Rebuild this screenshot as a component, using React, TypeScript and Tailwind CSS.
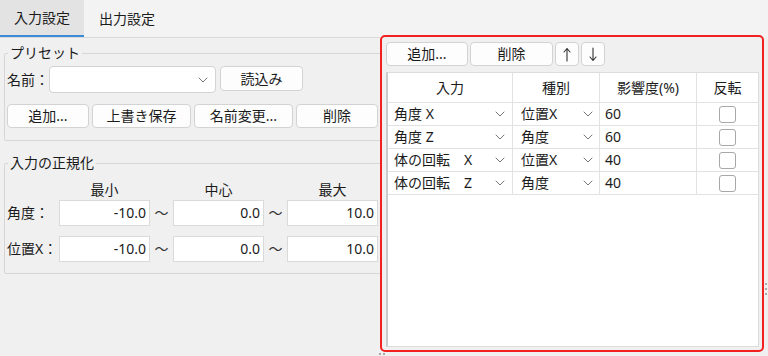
import { ChevronDown } from 'lucide-react';

const rows = [
  { input: '角度 X', kind: '位置X', rate: '60' },
  { input: '角度 Z', kind: '角度', rate: '60' },
  { input: '体の回転　X', kind: '位置X', rate: '40' },
  { input: '体の回転　Z', kind: '角度', rate: '40' },
];

const ranges = [
  { label: '角度：', min: '-10.0', mid: '0.0', max: '10.0' },
  { label: '位置X：', min: '-10.0', mid: '0.0', max: '10.0' },
];

function Btn({ w, h = 'h-[24px]', children }: { w: string; h?: string; children: React.ReactNode }) {
  return (
    <button className={`${w} ${h} shrink-0 bg-[#fdfdfd] border border-[#d3d3d3] rounded-[4px] flex items-center justify-center`}>
      {children}
    </button>
  );
}

function NumBox({ value }: { value: string }) {
  return (
    <div className="h-[26px] bg-white border border-[#dadada] flex items-center justify-end pr-[3px]">
      {value}
    </div>
  );
}

// thin arrow like the system glyph
function Arrow({ down }: { down?: boolean }) {
  return (
    <svg width="10" height="15" viewBox="0 0 10 15" className={down ? 'rotate-180' : ''}>
      <path d="M5 1.5V14M5 1.5L2 5M5 1.5L8 5" stroke="#333" strokeWidth="1.1" fill="none" strokeLinecap="round" />
    </svg>
  );
}

export default function App() {
  return (
    <div className="relative w-[768px] h-[356px] overflow-hidden bg-[#f0f0f0] text-[#1b1b1b] text-[14px] leading-[18px] font-['Noto_Sans','Noto_Sans_CJK_JP',sans-serif] flex flex-col">
      {/* tabs */}
      <div className="h-[37px] shrink-0 flex bg-[#f3f3f3]">
        <div className="w-[84px] bg-[#e3e3e3] border-b-2 border-[#3d8bd6] flex items-center justify-center">
          入力設定
        </div>
        <div className="w-[86px] flex items-center justify-center">出力設定</div>
      </div>

      <div className="flex flex-1 min-h-0">
        {/* left pane */}
        <div className="w-[380px] shrink-0 border-t border-[#dadada] overflow-hidden pl-[4px]">
          <fieldset className="mt-[6px] w-[400px] border border-[#d6d6d6] rounded-[2px] pl-[2px] pt-[4px] pb-[12px]">
            <legend className="ml-[1px] px-[2px]">プリセット</legend>
            <div className="flex items-start">
              <span className="w-[42px] h-[27px] flex items-center">名前：</span>
              <div className="w-[167px] h-[27px] bg-white border border-[#d3d3d3] rounded-[4px] flex items-center justify-end pr-[4px]">
                <ChevronDown size={16} strokeWidth={1.25} className="text-[#5a5a5a]" />
              </div>
              <div className="ml-[4px]">
                <Btn w="w-[83px]" h="h-[25px]">読込み</Btn>
              </div>
            </div>
            <div className="mt-[11px] flex gap-[3px]">
              <Btn w="w-[82px]">追加...</Btn>
              <Btn w="w-[99px]">上書き保存</Btn>
              <Btn w="w-[99px]">名前変更...</Btn>
              <Btn w="w-[82px]">削除</Btn>
            </div>
          </fieldset>

          <fieldset className="mt-[13px] w-[400px] border border-[#d6d6d6] rounded-[2px] pl-[2px] pt-[9px] pb-[11px]">
            <legend className="ml-[1px] px-[2px]">入力の正規化</legend>
            <div className="grid grid-cols-[52px_91px_23px_91px_23px_91px] items-center">
              <span />
              <span className="text-center">最小</span>
              <span />
              <span className="text-center">中心</span>
              <span />
              <span className="text-center">最大</span>
            </div>
            {ranges.map((r, i) => (
              <div
                key={r.label}
                className={`grid grid-cols-[52px_91px_23px_91px_23px_91px] items-center ${i === 0 ? 'mt-[1px]' : 'mt-[10px]'}`}
              >
                <span>{r.label}</span>
                <NumBox value={r.min} />
                <span className="text-center text-[#333]">～</span>
                <NumBox value={r.mid} />
                <span className="text-center text-[#333]">～</span>
                <NumBox value={r.max} />
              </div>
            ))}
          </fieldset>
        </div>

        {/* right pane, highlighted */}
        <div className="w-[384px] h-[317px] -mt-[2px] shrink-0 border-2 border-[#f2201f] rounded-[5px] bg-[#f0f0f0] pl-[4px] pr-[3px] pt-[5px] pb-[3px] flex flex-col">
          <div className="flex gap-[2px]">
            <Btn w="w-[82px]">追加...</Btn>
            <Btn w="w-[83px]">削除</Btn>
            <Btn w="w-[24px]"><Arrow /></Btn>
            <Btn w="w-[24px]"><Arrow down /></Btn>
          </div>
          <div className="mt-[6px] flex-1 bg-white border-l-2 border-l-[#cbcbcb] border-y border-r border-[#dcdcdc]">
            <div className="grid grid-cols-[125px_87px_97px_1fr] h-[30px]">
              <div className="border-r border-b border-[#e2e2e2] flex items-center justify-center">入力</div>
              <div className="border-r border-b border-[#e2e2e2] flex items-center justify-center">種別</div>
              <div className="border-r border-b border-[#e2e2e2] flex items-center justify-center">影響度(%)</div>
              <div className="border-b border-[#e2e2e2] flex items-center justify-center">反転</div>
            </div>
            {rows.map((r) => (
              <div key={r.input} className="grid grid-cols-[125px_87px_97px_1fr] h-[23px]">
                <div className="border-r border-b border-[#e2e2e2] flex items-center justify-between pl-[6px] pr-[4px]">
                  <span className="whitespace-pre">{r.input}</span>
                  <ChevronDown size={16} strokeWidth={1.25} className="text-[#5a5a5a]" />
                </div>
                <div className="border-r border-b border-[#e2e2e2] flex items-center justify-between pl-[8px] pr-[3px]">
                  <span>{r.kind}</span>
                  <ChevronDown size={16} strokeWidth={1.25} className="text-[#5a5a5a]" />
                </div>
                <div className="border-r border-b border-[#e2e2e2] flex items-center pl-[5px]">{r.rate}</div>
                <div className="border-b border-[#e2e2e2] flex items-center justify-center">
                  <span className="w-[17px] h-[17px] rounded-[3px] border border-[#a8a8a8] bg-white" />
                </div>
              </div>
            ))}
          </div>
        </div>
      </div>

      {/* splitter grips */}
      <div className="absolute left-[379px] top-[353px] flex gap-[2px]">
        <span className="w-[2px] h-[2px] bg-[#a8a8a8]" />
        <span className="w-[2px] h-[2px] bg-[#a8a8a8]" />
      </div>
      <div className="absolute left-[765px] top-[283px] flex flex-col gap-[3px]">
        <span className="w-[2px] h-[2px] bg-[#a8a8a8]" />
        <span className="w-[2px] h-[2px] bg-[#a8a8a8]" />
        <span className="w-[2px] h-[2px] bg-[#a8a8a8]" />
      </div>
    </div>
  );
}
